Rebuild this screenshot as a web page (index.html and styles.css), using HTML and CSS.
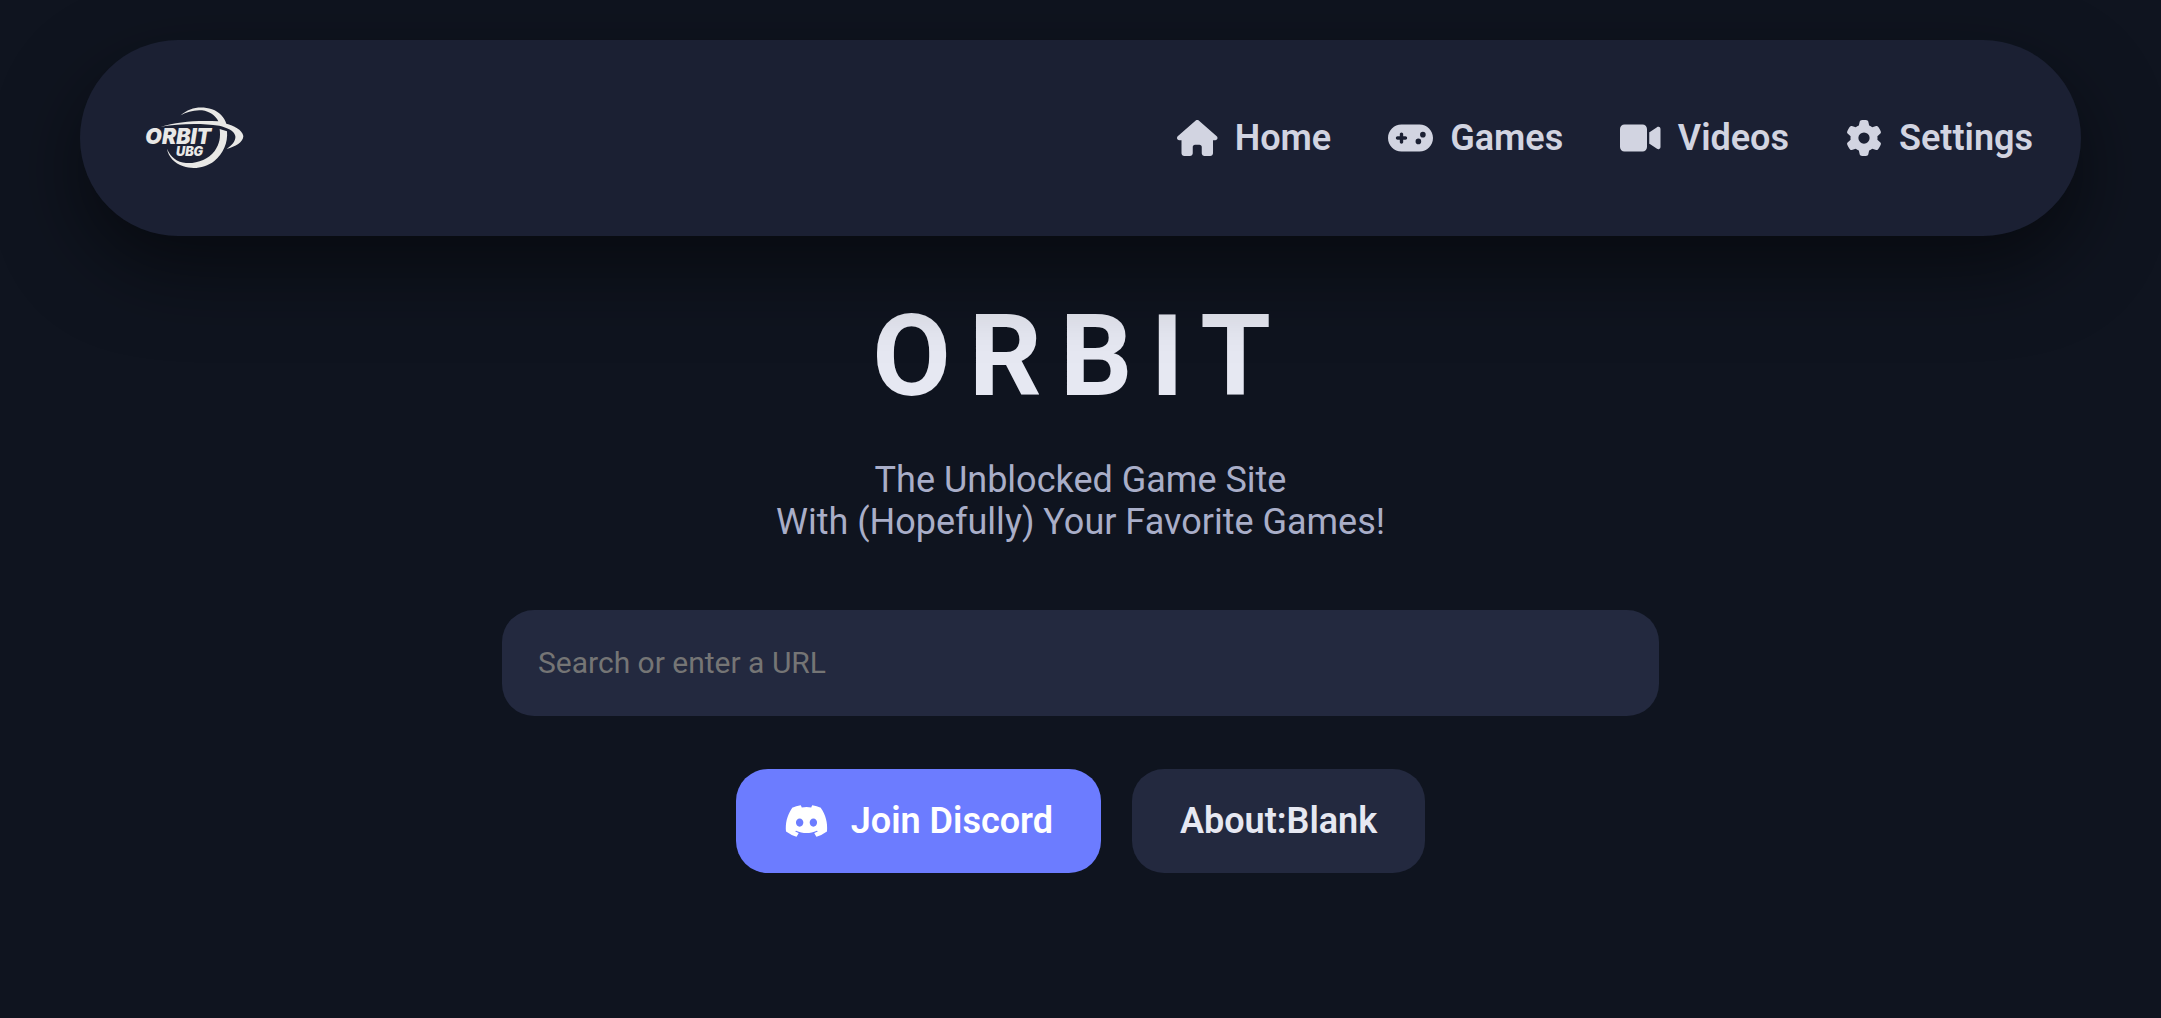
FILE: index.html
```html
<!DOCTYPE html>
<html lang="en">
<head>
  <meta charset="utf-8">
  <meta name="viewport" content="width=device-width, initial-scale=1">
  <title>Orbit</title>
  <link rel="stylesheet" href="styles.css">
</head>
<body>
  <nav class="navbar">
    <a class="logo" href="#" aria-label="Orbit UBG">
      <svg viewBox="-6 -78 396 444">
        <path d="M152 76C178 52 214 47 246 58C268 66 283 82 289 101C310 106 337 119 340 138C340 157 316 170 290 177C306 166 318 153 316 138C312 121 291 113 268 107C210 99 150 101 92 110C140 96 200 90 265 94C256 76 240 65 216 61C192 59 170 66 152 76Z"/>
        <path d="M269 117L291 124C294 158 280 191 253 213C226 234 190 239 160 229C133 219 115 201 111 176C122 201 141 217 168 219C201 221 235 209 254 183C269 162 272 141 269 117Z"/>
        <text x="46" y="163" class="logo-big">ORBIT</text>
        <text x="138" y="199" class="logo-small">UBG</text>
      </svg>
    </a>
    <div class="nav-links">
      <a href="#">
        <svg class="icon" viewBox="0 0 576 512"><path d="M575.8 255.5c0 18-15 32.1-32 32.1h-32l.7 160.2c0 2.7-.2 5.4-.5 8.1V472c0 22.1-17.9 40-40 40H456c-1.1 0-2.2 0-3.3-.1c-1.4 .1-2.8 .1-4.2 .1H416 392c-22.1 0-40-17.9-40-40V448 384c0-17.7-14.3-32-32-32H256c-17.7 0-32 14.3-32 32v64 24c0 22.1-17.9 40-40 40H160 128.1c-1.5 0-3-.1-4.5-.2c-1.2 .1-2.4 .2-3.6 .2H104c-22.1 0-40-17.9-40-40V360c0-.9 0-1.9 .1-2.8V287.6H32c-18 0-32-14-32-32.1c0-9 3-17 10-24L266.4 8c7-7 15-8 22-8s15 2 21 7L564.8 231.5c8 7 12 15 11 24z"/></svg>
        Home
      </a>
      <a href="#">
        <svg class="icon" viewBox="0 0 640 512"><path d="M192 64C86 64 0 150 0 256S86 448 192 448H448c106 0 192-86 192-192s-86-192-192-192H192zM496 168a40 40 0 1 1 0 80 40 40 0 1 1 0-80zM392 304a40 40 0 1 1 80 0 40 40 0 1 1 -80 0zM168 200c0-13.3 10.7-24 24-24s24 10.7 24 24v32h32c13.3 0 24 10.7 24 24s-10.7 24-24 24H216v32c0 13.3-10.7 24-24 24s-24-10.7-24-24V280H136c-13.3 0-24-10.7-24-24s10.7-24 24-24h32V200z"/></svg>
        Games
      </a>
      <a href="#">
        <svg class="icon" viewBox="0 0 576 512"><path d="M0 128C0 92.7 28.7 64 64 64H320c35.3 0 64 28.7 64 64V384c0 35.3-28.7 64-64 64H64c-35.3 0-64-28.7-64-64V128zM559.1 99.8c10.4 5.6 16.9 16.4 16.9 28.2V384c0 11.8-6.5 22.6-16.9 28.2s-23 5-32.9-1.6l-96-64L416 337.1V320 192 174.9l14.2-9.5 96-64c9.8-6.5 22.4-7.2 32.9-1.6z"/></svg>
        Videos
      </a>
      <a href="#">
        <svg class="icon" viewBox="0 0 512 512"><path d="M495.9 166.6c3.2 8.7 .5 18.4-6.4 24.6l-43.3 39.4c1.1 8.3 1.7 16.8 1.7 25.4s-.6 17.1-1.7 25.4l43.3 39.4c6.9 6.2 9.6 15.9 6.4 24.6c-4.4 11.9-9.7 23.3-15.8 34.3l-4.7 8.1c-6.6 11-14 21.4-22.1 31.2c-5.9 7.2-15.7 9.6-24.5 6.8l-55.7-17.7c-13.4 10.3-28.2 18.9-44 25.4l-12.5 57.1c-2 9.1-9 16.3-18.2 17.8c-13.8 2.3-28 3.5-42.5 3.5s-28.7-1.2-42.5-3.5c-9.2-1.5-16.2-8.7-18.2-17.8l-12.5-57.1c-15.8-6.5-30.6-15.1-44-25.4L83.1 425.9c-8.8 2.8-18.6 .3-24.5-6.8c-8.1-9.8-15.5-20.2-22.1-31.2l-4.7-8.1c-6.1-11-11.4-22.4-15.8-34.3c-3.2-8.7-.5-18.4 6.4-24.6l43.3-39.4C64.6 273.1 64 264.6 64 256s.6-17.1 1.7-25.4L22.4 191.2c-6.9-6.2-9.6-15.9-6.4-24.6c4.4-11.9 9.7-23.3 15.8-34.3l4.7-8.1c6.6-11 14-21.4 22.1-31.2c5.9-7.2 15.7-9.6 24.5-6.8l55.7 17.7c13.4-10.3 28.2-18.9 44-25.4l12.5-57.1c2-9.1 9-16.3 18.2-17.8C227.3 1.2 241.5 0 256 0s28.7 1.2 42.5 3.5c9.2 1.5 16.2 8.7 18.2 17.8l12.5 57.1c15.8 6.5 30.6 15.1 44 25.4l55.7-17.7c8.8-2.8 18.6-.3 24.5 6.8c8.1 9.8 15.5 20.2 22.1 31.2l4.7 8.1c6.1 11 11.4 22.4 15.8 34.3zM256 336a80 80 0 1 0 0-160 80 80 0 1 0 0 160z"/></svg>
        Settings
      </a>
    </div>
  </nav>

  <main class="hero">
    <h1>ORBIT</h1>
    <p>The Unblocked Game Site<br>With (Hopefully) Your Favorite Games!</p>
    <input type="text" class="search" placeholder="Search or enter a URL" aria-label="Search or enter a URL">
    <div class="buttons">
      <button type="button" class="btn primary">
        <svg class="icon" viewBox="0 0 640 512"><path d="M524.531,69.836a1.5,1.5,0,0,0-.764-.7A485.065,485.065,0,0,0,404.081,32.03a1.816,1.816,0,0,0-1.923.91,337.461,337.461,0,0,0-14.9,30.6,447.848,447.848,0,0,0-134.426,0,309.541,309.541,0,0,0-15.135-30.6,1.89,1.89,0,0,0-1.924-.91A483.689,483.689,0,0,0,116.085,69.137a1.712,1.712,0,0,0-.788.676C39.068,183.651,18.186,294.69,28.43,404.354a2.016,2.016,0,0,0,.765,1.375A487.666,487.666,0,0,0,176.02,479.918a1.9,1.9,0,0,0,2.063-.676A348.2,348.2,0,0,0,208.12,430.4a1.86,1.86,0,0,0-1.019-2.588,321.173,321.173,0,0,1-45.868-21.853,1.885,1.885,0,0,1-.185-3.126c3.082-2.309,6.166-4.711,9.109-7.137a1.819,1.819,0,0,1,1.9-.256c96.229,43.917,200.41,43.917,295.5,0a1.812,1.812,0,0,1,1.924.233c2.944,2.426,6.027,4.851,9.132,7.16a1.884,1.884,0,0,1-.162,3.126,301.407,301.407,0,0,1-45.89,21.83,1.875,1.875,0,0,0-1,2.611,391.055,391.055,0,0,0,30.014,48.815,1.864,1.864,0,0,0,2.063.7A486.048,486.048,0,0,0,610.7,405.729a1.882,1.882,0,0,0,.765-1.352C623.729,277.594,590.933,167.465,524.531,69.836ZM222.491,337.58c-28.972,0-52.844-26.587-52.844-59.239S193.056,219.1,222.491,219.1c29.665,0,53.306,26.82,52.843,59.239C275.334,310.993,251.924,337.58,222.491,337.58Zm195.38,0c-28.971,0-52.843-26.587-52.843-59.239S388.437,219.1,417.871,219.1c29.667,0,53.307,26.82,52.844,59.239C470.715,310.993,447.538,337.58,417.871,337.58Z"/></svg>
        Join Discord
      </button>
      <button type="button" class="btn">About:Blank</button>
    </div>
  </main>
</body>
</html>
```

FILE: styles.css
```css
* {
    box-sizing: border-box;
    font-family: Roboto, sans-serif;
}
body {
    margin: 0;
    background-color: #0f141f;
    color: #e6e8f2;
}
.navbar {
    position: relative;
    z-index: 10;
    display: flex;
    justify-content: space-between;
    align-items: center;
    margin: 40px 80px 0;
    padding: 24px 48px;
    border-radius: 100px;
    background-color: #1b2033;
    box-shadow: 0 32px 80px rgba(0, 0, 0, 0.5);
}
.logo svg {
    display: block;
    width: 132px;
    height: 148px;
    fill: #e9e8e6;
}
.logo text {
    font-family: Inter, sans-serif;
    font-weight: 900;
    font-style: italic;
}
.logo-big {
    font-size: 64px;
}
.logo-small {
    font-size: 38px;
}
.nav-links {
    display: flex;
    gap: 57px;
}
.nav-links a {
    display: flex;
    align-items: center;
    gap: 17px;
    color: #d2d4e1;
    font-size: 36px;
    font-weight: 600;
    line-height: 42px;
    text-decoration: none;
}
.icon {
    height: 36px;
    fill: currentColor;
}
.hero {
    display: flex;
    flex-direction: column;
    align-items: center;
    padding: 52px 80px;
    text-align: center;
}
h1 {
    margin: 0;
    font-size: 114px;
    line-height: 136px;
    font-weight: 700;
    letter-spacing: 18px;
}
.hero p {
    margin: 35px 0 0;
    color: #a9aec8;
    font-size: 36px;
    line-height: 42px;
}
.search {
    width: 100%;
    max-width: 1157px;
    margin-top: 67px;
    padding: 36px;
    border: none;
    border-radius: 32px;
    outline: none;
    background-color: #23293f;
    color: #e6e8f2;
    font-size: 30px;
    line-height: 34px;
}
.search::placeholder {
    color: #757575;
}
.buttons {
    display: flex;
    gap: 31px;
    margin-top: 53px;
}
.btn {
    display: flex;
    align-items: center;
    gap: 22px;
    padding: 31px 48px;
    border: none;
    border-radius: 32px;
    background-color: #23293f;
    color: #e6e8f2;
    font-size: 36px;
    font-weight: 600;
    line-height: 42px;
    cursor: pointer;
}
.btn.primary {
    background-color: #6c7cff;
    color: white;
}
```
